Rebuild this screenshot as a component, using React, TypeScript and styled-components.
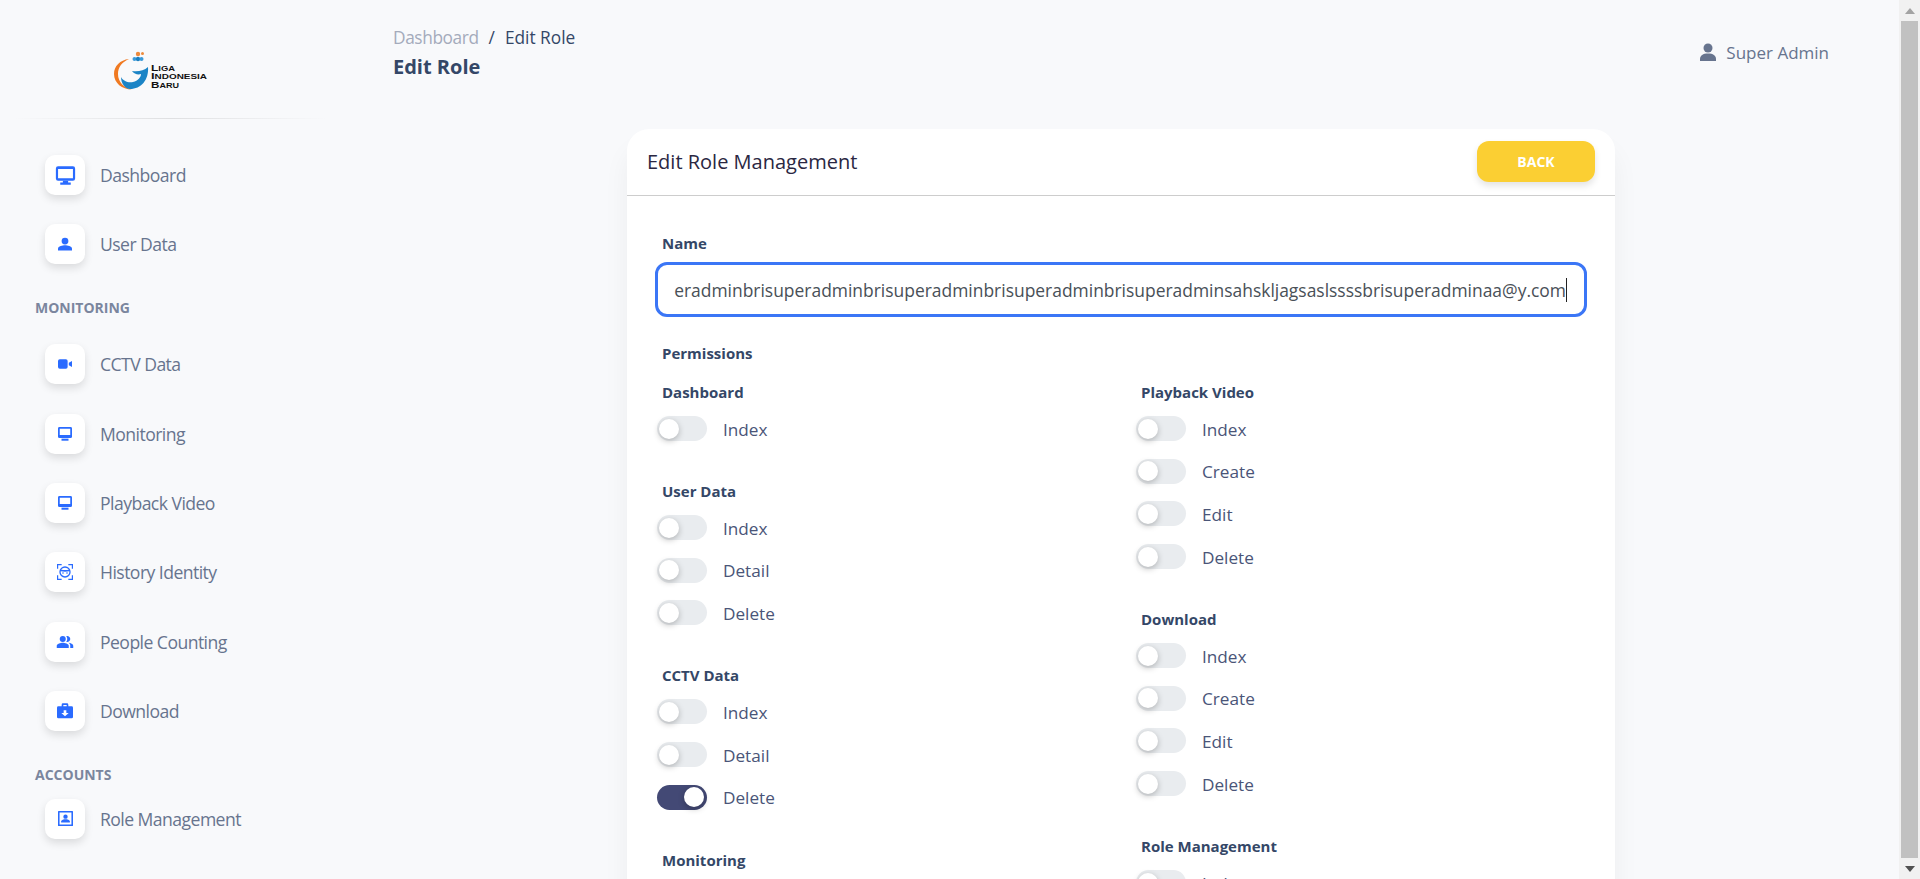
import React from "react";
import styled, { createGlobalStyle } from "styled-components";

const Global = createGlobalStyle`
  html, body { margin: 0; padding: 0; height: 100%; overflow: hidden; background: #f8f9fb; }
  * { box-sizing: border-box; }
  body { font-family: "Open Sans", "Noto Sans", sans-serif; }
`;

const Page = styled.div`display: flex; height: 100vh; overflow: hidden; background: #f8f9fb;`;
const Sidebar = styled.aside`width: 343px; flex: none; display: flex; flex-direction: column;`;
const LogoBlock = styled.div`height: 118px; padding: 50px 0 0 113px;`;
const Divider = styled.div`
  height: 1px; margin: 0 15px 0 13px;
  background: linear-gradient(90deg, rgba(0,0,0,0), rgba(0,0,0,.1), rgba(0,0,0,0));
`;
const Nav = styled.nav`display: flex; flex-direction: column; padding: 36px 0 0 45px;`;
const NavItem = styled.div`display: flex; align-items: center; gap: 15px; height: 40px; margin-bottom: 29.33px;`;
const IconBox = styled.div`
  width: 40px; height: 40px; border-radius: 10px; background: #fff; display: flex;
  align-items: center; justify-content: center; color: #2a6bff;
  box-shadow: 0 4px 8px rgba(0,0,0,.12);
`;
const NavText = styled.span`font-size: 17.600px; letter-spacing: -0.55px; color: #67748e; line-height: 24px;`;
const NavHeading = styled.div<{ $after: number }>`
  margin: 4.67px 0 ${(p) => p.$after}px -10px; height: 20px; line-height: 20px;
  font-size: 14px; font-weight: 700; color: #7b869e; text-transform: uppercase;
`;

const Main = styled.main`flex: 1; min-width: 0; display: flex; flex-direction: column;`;
const TopBar = styled.header`height: 129px; flex: none; display: flex; justify-content: space-between; padding: 26px 70px 0 50px;`;
const Crumbs = styled.div`display: flex; gap: 10px; font-size: 17.300px; line-height: 24px; color: #344767;`;
const CrumbMuted = styled.span`color: #a4abbb; letter-spacing: -0.4px;`;
const PageTitle = styled.h1`margin: 4px 0 0; font-size: 20px; line-height: 26px; font-weight: 700; color: #344767;`;
const UserChip = styled.div`display: flex; align-items: center; gap: 10px; height: 24px; margin-top: 14px; font-size: 17px; font-weight: 500; color: #67748e;`;

const Card = styled.section`
  width: 988px; flex: none; margin: 0 auto; background: #fff; border-radius: 22px 22px 0 0;
  box-shadow: 0 20px 27px rgba(0,0,0,.05);
`;
const CardHead = styled.div`
  height: 67px; display: flex; align-items: center; justify-content: space-between;
  padding: 0 20px 2px; border-bottom: 1px solid #cdcdcd;
`;
const CardTitle = styled.h2`margin: 1px 0 0; font-size: 20px; font-weight: 400; color: #2a2742;`;
const BackButton = styled.button`
  width: 118px; height: 41px; border: 0; border-radius: 12px; background: #fbcf33; color: #fff;
  font: 700 14px "Open Sans", sans-serif; box-shadow: 0 4px 7px rgba(0,0,0,.11);
`;
const CardBody = styled.div`padding: 37px 28px 0;`;
const FieldLabel = styled.div`margin-left: 7px; font-size: 15px; line-height: 20px; font-weight: 700; color: #344767;`;
const NameInput = styled.div`
  height: 55px; margin: 9px 0 26px; border: 3px solid #3b76f6; border-radius: 12px; background: #fff;
  display: flex; justify-content: flex-end; align-items: center; padding: 0 17px; overflow: hidden;
  font-size: 17.450px; color: #495057; white-space: nowrap;
`;
const Caret = styled.span`border-right: 1px solid #222; line-height: 24px;`;
const Columns = styled.div`display: grid; grid-template-columns: 479px 1fr; margin-top: 19px;`;
const Column = styled.div`display: flex; flex-direction: column;`;
const Group = styled.div`margin-bottom: 40px; display: flex; flex-direction: column; gap: 17.700px;`;
const GroupLabel = styled(FieldLabel)`margin-bottom: -3.700px;`;
const Row = styled.div`display: flex; align-items: center; gap: 16px; height: 25px; margin-left: 2px;`;
const Track = styled.span<{ $on?: boolean }>`
  position: relative; width: 50px; height: 25px; border-radius: 13px; flex: none;
  background: ${(p) => (p.$on ? "#434975" : "#e9ecef")};
`;
const Knob = styled.span<{ $on?: boolean }>`
  position: absolute; top: 2.500px; left: ${(p) => (p.$on ? "27px" : "2px")}; width: 20px; height: 20px; border-radius: 50%;
  background: #fff; box-shadow: 0 2px 6px rgba(0,0,0,.25);
`;
const RowText = styled.span`font-size: 17.200px; color: #4a5578; line-height: 24px; padding-top: 2px;`;

const Scrollbar = styled.div`width: 21px; flex: none; background: #f1f1f1; display: flex; flex-direction: column; align-items: center;`;
const ArrowCell = styled.div`height: 21px; flex: none; display: flex; align-items: center; justify-content: center;`;
const Thumb = styled.div`flex: 1; width: 17px; background: #c1c1c1;`;
const BrandText = styled.text`font-family: "Liberation Sans", sans-serif; font-weight: 700; fill: #111;`;

const Svg = ({ s, children }: { s: number; children: React.ReactNode }) => (
  <svg width={s} height={s} viewBox="0 0 24 24" fill="currentColor">{children}</svg>
);

const Desktop = () => (
  <Svg s={21}>
    <path fillRule="evenodd" d="M3.500 1.500h17A2.500 2.500 0 0 1 23 4v11.500a2.500 2.500 0 0 1-2.500 2.500h-17A2.500 2.500 0 0 1 1 15.500V4a2.500 2.500 0 0 1 2.500-2.500Zm0 3v10.500h17V4.500Z" />
    <path d="M9 18h6v2h3v2.500H6V20h3Z" />
  </Svg>
);
const Person = () => (
  <Svg s={14}>
    <circle cx="12" cy="7" r="5.800" />
    <path d="M0 23v-3C0 15.500 8 14 12 14s12 1.500 12 6v3Z" />
  </Svg>
);
const Video = () => (
  <Svg s={14}>
    <rect x="0" y="4" width="16.500" height="16" rx="3" />
    <path d="M18.500 10l5.500-3v10l-5.500-3Z" />
  </Svg>
);
const SmallMonitor = () => (
  <Svg s={14}>
    <path fillRule="evenodd" d="M2.500 0h19A2.500 2.500 0 0 1 24 2.500v14a2.500 2.500 0 0 1-2.500 2.500h-19A2.500 2.500 0 0 1 0 16.500v-14A2.500 2.500 0 0 1 2.500 0Zm.5 3v10.500h18V3Z" />
    <path d="M6 20h12v3.500H6Z" />
  </Svg>
);
const FaceScan = () => (
  <Svg s={16}>
    <path d="M0 7V0h7v1.800H1.800V7Zm17-7h7v7h-1.800V1.800H17ZM1.800 17v5.200H7V24H0v-7Zm22.200 0v7h-7v-1.800h5.200V17Z" />
    <path fillRule="evenodd" d="M12 3.500a8.500 8.500 0 1 0 0 17 8.500 8.500 0 0 0 0-17Zm0 2c2.500 0 4.500 1.200 5.700 3-2.700.6-7.500.6-11.400 0C7.500 6.700 9.500 5.500 12 5.500Zm0 13a6.500 6.500 0 0 1-6.500-7.500c4 .7 9 .7 13 0A6.500 6.500 0 0 1 12 18.500Z" />
    <circle cx="9" cy="13.500" r="1.200" />
    <circle cx="15" cy="13.500" r="1.200" />
  </Svg>
);
const People = () => (
  <Svg s={18}>
    <path fillRule="evenodd" d="M16.670 13.130C18.040 14.060 19 15.320 19 17v3h4v-3c0-2.180-3.570-3.470-6.330-3.870Z" />
    <circle cx="9" cy="8" r="4" />
    <path fillRule="evenodd" d="M15 12c2.210 0 4-1.790 4-4s-1.790-4-4-4c-.47 0-.91.1-1.330.24C14.500 5.270 15 6.580 15 8s-.5 2.730-1.330 3.760c.42.14.86.24 1.330.24Z" />
    <path fillRule="evenodd" d="M9 13c-2.670 0-8 1.340-8 4v3h16v-3c0-2.660-5.330-4-8-4Z" />
  </Svg>
);
const CaseDownload = () => (
  <Svg s={16}>
    <path fillRule="evenodd" d="M7 5V2.500A2 2 0 0 1 9 .500h6a2 2 0 0 1 2 2V5h5a2 2 0 0 1 2 2v14a2 2 0 0 1-2 2H2a2 2 0 0 1-2-2V7a2 2 0 0 1 2-2Zm2.500 0h5V3h-5Zm.500 6v4H6.500l5.500 5 5.500-5H14v-4Z" />
  </Svg>
);
const ContactBox = () => (
  <Svg s={15}>
    <path fillRule="evenodd" d="M1 0h22a1 1 0 0 1 1 1v22a1 1 0 0 1-1 1H1a1 1 0 0 1-1-1V1a1 1 0 0 1 1-1Zm1.500 2.500v19h19v-19Z" />
    <circle cx="12" cy="9" r="3.500" />
    <path d="M5 18.500v-2c0-2.500 4.500-3.500 7-3.500s7 1 7 3.500v2Z" />
  </Svg>
);

const Logo = () => (
  <svg width="96" height="40" viewBox="0 0 96 40">
    <path d="M16 9C7 10 1 16 1 24C1 33 9 39.500 19 39.500C11 38 5 32 5 24C5 17 9 12 16 9Z" fill="#f07a22" />
    <path d="M35 17C36 30 28 39 17 39C12 39 8 33 8 27C10 31 15 33 20 32C25 31 28 27 28 24C25 25 21 24 19 21C24 22 31 21 35 17Z" fill="#1b84c6" />
    <circle cx="21.500" cy="9" r="2" fill="#3a9ad9" />
    <circle cx="25" cy="9" r="2.200" fill="#1b7fc0" />
    <circle cx="28.500" cy="9" r="2" fill="#3a9ad9" />
    <circle cx="25" cy="4" r="2.200" fill="#ee8a3c" />
    <circle cx="29.500" cy="3.500" r="1.500" fill="#ee8a3c" />
    <BrandText x="38" y="20.500" fontSize="7" textLength="24" lengthAdjust="spacingAndGlyphs"><tspan fontSize="9">L</tspan>IGA</BrandText>
    <BrandText x="38" y="29" fontSize="7" textLength="56" lengthAdjust="spacingAndGlyphs"><tspan fontSize="9">I</tspan>NDONESIA</BrandText>
    <BrandText x="38" y="37.500" fontSize="7" textLength="28" lengthAdjust="spacingAndGlyphs"><tspan fontSize="9">B</tspan>ARU</BrandText>
  </svg>
);

type G = { title: string; rows: string[]; on?: string };
const left: G[] = [
  { title: "Dashboard", rows: ["Index"] },
  { title: "User Data", rows: ["Index", "Detail", "Delete"] },
  { title: "CCTV Data", rows: ["Index", "Detail", "Delete"], on: "Delete" },
  { title: "Monitoring", rows: ["Index"] },
];
const right: G[] = [
  { title: "Playback Video", rows: ["Index", "Create", "Edit", "Delete"] },
  { title: "Download", rows: ["Index", "Create", "Edit", "Delete"] },
  { title: "Role Management", rows: ["Index"] },
];

const PermColumn = ({ groups }: { groups: G[] }) => (
  <Column>
    {groups.map((g) => (
      <Group key={g.title}>
        <GroupLabel>{g.title}</GroupLabel>
        {g.rows.map((r) => (
          <Row key={r}>
            <Track $on={g.on === r}><Knob $on={g.on === r} /></Track>
            <RowText>{r}</RowText>
          </Row>
        ))}
      </Group>
    ))}
  </Column>
);

const Item = ({ icon, label }: { icon: React.ReactNode; label: string }) => (
  <NavItem>
    <IconBox>{icon}</IconBox>
    <NavText>{label}</NavText>
  </NavItem>
);

export default function App() {
  return (
    <Page>
      <Global />
      <Sidebar>
        <LogoBlock><Logo /></LogoBlock>
        <Divider />
        <Nav>
          <Item icon={<Desktop />} label="Dashboard" />
          <Item icon={<Person />} label="User Data" />
          <NavHeading $after={26}>Monitoring</NavHeading>
          <Item icon={<Video />} label="CCTV Data" />
          <Item icon={<SmallMonitor />} label="Monitoring" />
          <Item icon={<SmallMonitor />} label="Playback Video" />
          <Item icon={<FaceScan />} label="History Identity" />
          <Item icon={<People />} label="People Counting" />
          <Item icon={<CaseDownload />} label="Download" />
          <NavHeading $after={14}>Accounts</NavHeading>
          <Item icon={<ContactBox />} label="Role Management" />
        </Nav>
      </Sidebar>
      <Main>
        <TopBar>
          <div>
            <Crumbs><CrumbMuted>Dashboard</CrumbMuted><span>/</span><span>Edit Role</span></Crumbs>
            <PageTitle>Edit Role</PageTitle>
          </div>
          <UserChip>
            <svg width="16" height="18" viewBox="0 0 16 18" fill="currentColor">
              <circle cx="8" cy="5" r="4.500" />
              <path d="M0 18v-2c0-3.500 3-5.500 8-5.500s8 2 8 5.500v2Z" />
            </svg>
            Super Admin
          </UserChip>
        </TopBar>
        <Card>
          <CardHead>
            <CardTitle>Edit Role Management</CardTitle>
            <BackButton>BACK</BackButton>
          </CardHead>
          <CardBody>
            <FieldLabel>Name</FieldLabel>
            <NameInput>
              <Caret>eradminbrisuperadminbrisuperadminbrisuperadminbrisuperadminsahskljagsaslssssbrisuperadminaa@y.com</Caret>
            </NameInput>
            <FieldLabel>Permissions</FieldLabel>
            <Columns>
              <PermColumn groups={left} />
              <PermColumn groups={right} />
            </Columns>
          </CardBody>
        </Card>
      </Main>
      <Scrollbar>
        <ArrowCell>
          <svg width="10" height="6" viewBox="0 0 10 6"><path d="M5 0l5 6H0Z" fill="#a3a3a3" /></svg>
        </ArrowCell>
        <Thumb />
        <ArrowCell>
          <svg width="10" height="6" viewBox="0 0 10 6"><path d="M0 0h10L5 6Z" fill="#505050" /></svg>
        </ArrowCell>
      </Scrollbar>
    </Page>
  );
}
